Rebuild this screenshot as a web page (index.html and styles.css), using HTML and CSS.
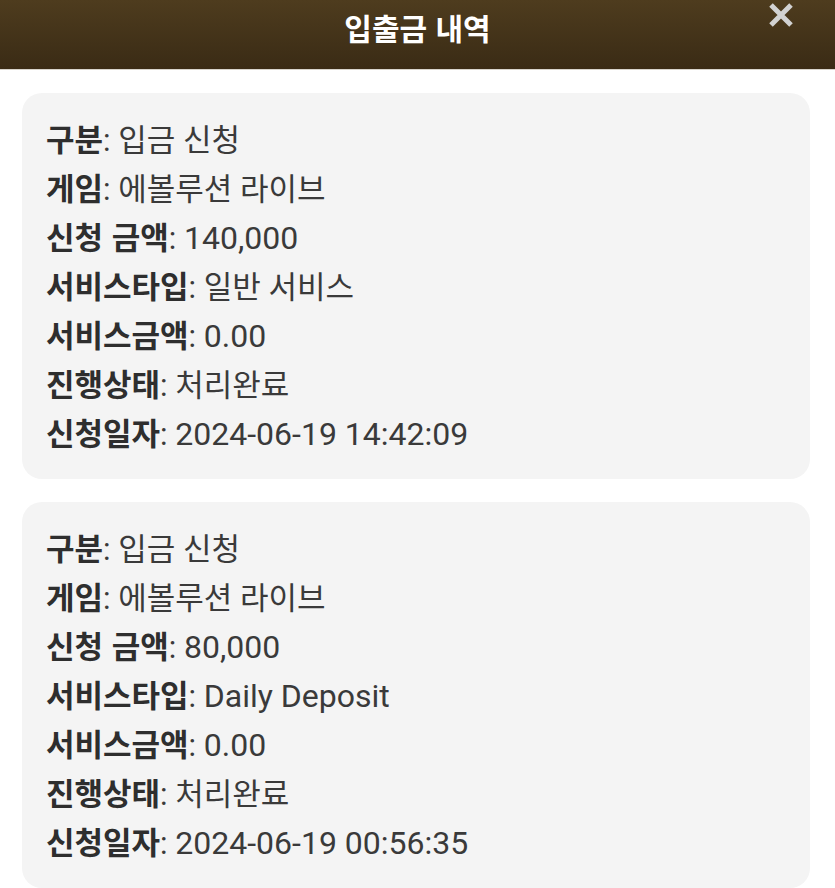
FILE: index.html
```html
<!DOCTYPE html>
<html lang="ko">
<head>
<meta charset="utf-8">
<title>입출금 내역</title>
<link rel="stylesheet" href="styles.css">
</head>
<body>
<header class="topbar">
  <h1 class="title">입출금 내역</h1>
  <button class="close" aria-label="닫기">
    <svg width="28" height="28" viewBox="0 0 28 28"><path d="M4 4 L24 24 M24 4 L4 24" stroke="#d2d2d2" stroke-width="5" stroke-linecap="butt"/></svg>
  </button>
</header>
<main class="list">
  <section class="card">
    <p class="row"><b>구분</b>: 입금 신청</p>
    <p class="row"><b>게임</b>: 에볼루션 라이브</p>
    <p class="row"><b>신청 금액</b>: <span class="num">140,000</span></p>
    <p class="row"><b>서비스타입</b>: 일반 서비스</p>
    <p class="row"><b>서비스금액</b>: <span class="num">0.00</span></p>
    <p class="row"><b>진행상태</b>: 처리완료</p>
    <p class="row"><b>신청일자</b>: <span class="num">2024-06-19 14:42:09</span></p>
  </section>
  <section class="card">
    <p class="row"><b>구분</b>: 입금 신청</p>
    <p class="row"><b>게임</b>: 에볼루션 라이브</p>
    <p class="row"><b>신청 금액</b>: <span class="num">80,000</span></p>
    <p class="row"><b>서비스타입</b>: <span class="num">Daily Deposit</span></p>
    <p class="row"><b>서비스금액</b>: <span class="num">0.00</span></p>
    <p class="row"><b>진행상태</b>: 처리완료</p>
    <p class="row"><b>신청일자</b>: <span class="num">2024-06-19 00:56:35</span></p>
  </section>
</main>
</body>
</html>
```
FILE: styles.css
```css
html, body {
  margin: 0;
  padding: 0;
  background: #ffffff;
}
body {
  font-family: Roboto, "Noto Sans CJK KR", sans-serif;
  color: #3a3a3a;
  overflow: hidden;
}
.topbar {
  height: 69px;
  background: linear-gradient(to bottom, #4e3c1e 0%, #3a2b15 100%);
  border-bottom: 1px solid #d8d4cc;
  display: flex;
  align-items: flex-start;
  justify-content: center;
  position: relative;
}
.title {
  margin: 0;
  padding-top: 7px;
  font-family: "Noto Sans CJK KR", sans-serif;
  font-weight: 700;
  font-size: 30px;
  line-height: 40px;
  color: #ffffff;
}
.close {
  position: absolute;
  top: 1px;
  right: 40px;
  background: none;
  border: 0;
  padding: 0;
  width: 28px;
  height: 28px;
}
.list {
  padding: 23px 25px 0 22px;
  display: flex;
  flex-direction: column;
  gap: 23px;
}
.card {
  background: #f4f4f4;
  border-radius: 20px;
  padding: 20px 24px 23px;
}
.row {
  margin: 0;
  font-size: 31px;
  line-height: 49px;
  height: 49px;
  color: #3a3a3a;
  white-space: nowrap;
}
.row b {
  font-family: "Noto Sans CJK KR", sans-serif;
  font-weight: 700;
  color: #2e2e2e;
}
.num {
  font-size: 32px;
}
```
